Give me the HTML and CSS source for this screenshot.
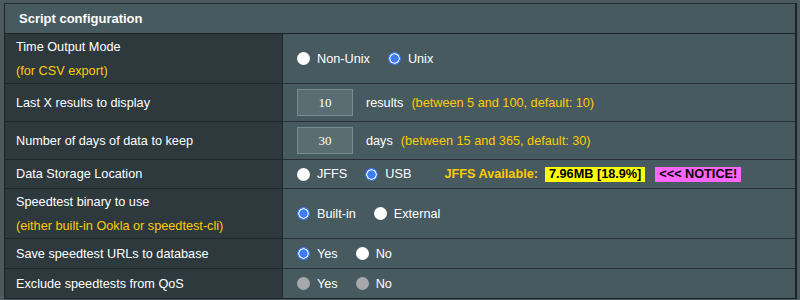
FILE: index.html
```html
<!DOCTYPE html>
<html>
<head>
<meta charset="utf-8">
<link rel="stylesheet" href="styles.css">
</head>
<body>
<div class="page">
<table class="form">
  <thead>
    <tr class="h-head"><td colspan="2" class="head">Script configuration</td></tr>
  </thead>
  <tbody>
    <tr class="h50">
      <th>Time Output Mode<br><span class="hint">(for CSV export)</span></th>
      <td><div class="opts">
        <label class="opt"><input type="radio" class="rb" name="tom">Non-Unix</label>
        <label class="opt"><input type="radio" class="rb" name="tom" checked>Unix</label>
      </div></td>
    </tr>
    <tr class="h38">
      <th>Last X results to display</th>
      <td><div class="opts">
        <input type="text" class="num" value="10"><span class="unit">results</span><span class="hint">(between 5 and 100, default: 10)</span>
      </div></td>
    </tr>
    <tr class="h38">
      <th>Number of days of data to keep</th>
      <td><div class="opts">
        <input type="text" class="num" value="30"><span class="unit">days</span><span class="hint">(between 15 and 365, default: 30)</span>
      </div></td>
    </tr>
    <tr class="h29">
      <th>Data Storage Location</th>
      <td><div class="opts">
        <label class="opt"><input type="radio" class="rb" name="dsl">JFFS</label>
        <label class="opt"><input type="radio" class="rb" name="dsl" checked>USB</label>
        <span class="jffs">JFFS Available:</span><span class="tag yellow">7.96MB [18.9%]</span><span class="tag pink">&lt;&lt;&lt; NOTICE!</span>
      </div></td>
    </tr>
    <tr class="h50">
      <th>Speedtest binary to use<br><span class="hint">(either built-in Ookla or speedtest-cli)</span></th>
      <td><div class="opts">
        <label class="opt"><input type="radio" class="rb" name="bin" checked>Built-in</label>
        <label class="opt"><input type="radio" class="rb" name="bin">External</label>
      </div></td>
    </tr>
    <tr class="h30">
      <th>Save speedtest URLs to database</th>
      <td><div class="opts">
        <label class="opt"><input type="radio" class="rb" name="url" checked>Yes</label>
        <label class="opt"><input type="radio" class="rb" name="url">No</label>
      </div></td>
    </tr>
    <tr class="h30">
      <th>Exclude speedtests from QoS</th>
      <td><div class="opts">
        <label class="opt dis"><input type="radio" class="rb" name="qos" disabled>Yes</label>
        <label class="opt dis"><input type="radio" class="rb" name="qos" disabled>No</label>
      </div></td>
    </tr>
  </tbody>
</table>
</div>
</body>
</html>
```

FILE: styles.css
```css
html, body {
  margin: 0;
  padding: 0;
  background: #4c595e;
  height: 300px;
  overflow: hidden;
}
body {
  font-family: "Liberation Sans", Arial, Helvetica, sans-serif;
  font-size: 12.7px;
  color: #ffffff;
}
.page {
  padding: 3px 0 0 4px;
  width: 793px;
}
.form {
  border-collapse: collapse;
  width: 793px;
  border: 1px solid #1c2427;
  border-right: 2px solid #1c2427;
}
.head {
  background: linear-gradient(#96a4a9, #6f8087);
  font-weight: bold;
  font-size: 13px;
  color: #ffffff;
  padding: 0 0 0 11px;
  border-bottom: 1px solid #1c2427;
}
.h-head { height: 30px; }
.h50 { height: 50px; }
.h38 { height: 38px; }
.h29 { height: 29px; }
.h30 { height: 30px; }
.form th {
  width: 266px;
  background: #2d393d;
  text-align: left;
  font-weight: normal;
  padding: 0 0 0 11px;
  line-height: 24px;
  border-top: 1px solid #1f282b;
  border-right: 1px solid #1f282b;
}
.form td {
  background: #475a5f;
  padding: 0 0 0 14px;
  border-top: 1px solid #263033;
}
.hint {
  color: #ffcc00;
}
.opts {
  display: flex;
  align-items: center;
}
.opt {
  display: flex;
  align-items: center;
  margin-right: 18px;
}
.rb {
  appearance: none;
  -webkit-appearance: none;
  width: 13px;
  height: 13px;
  margin: 0 7px 0 0;
  border-radius: 50%;
  background: #ffffff;
  flex: none;
}
.rb:checked {
  background: radial-gradient(circle, #3d7ef6 0 3.9px, #ffffff 4.4px 4.9px, #3d7ef6 5.4px);
}
.rb:disabled {
  background: #a6a8a9;
}
.num {
  box-sizing: border-box;
  width: 56px;
  height: 27px;
  margin: 0 13px 0 0;
  padding: 0;
  background: #5a6e72;
  border: 1px solid #7a8c8f;
  color: #ffffff;
  font-family: "Liberation Serif", "Times New Roman", serif;
  font-size: 13px;
  text-align: center;
}
.unit {
  margin-right: 8px;
}
.jffs {
  margin-left: 15px;
  color: #ffcc00;
  font-weight: bold;
}
.tag {
  color: #000000;
  font-weight: bold;
  padding: 0 4px;
  line-height: 15px;
}
.yellow {
  background: #ffff00;
  margin-left: 7px;
}
.pink {
  background: #ff66ff;
  margin-left: 10px;
}
```
